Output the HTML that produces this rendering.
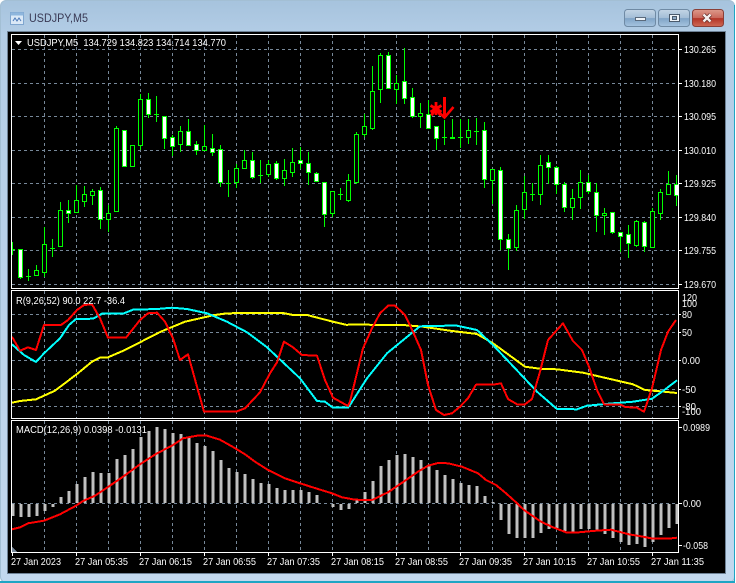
<!DOCTYPE html>
<html><head><meta charset="utf-8"><style>
html,body{margin:0;padding:0;background:#fff;width:736px;height:583px;overflow:hidden}
svg{display:block}
text{font-family:"Liberation Sans",sans-serif;font-size:10.5px;fill:#fff}
</style></head><body>
<svg xmlns="http://www.w3.org/2000/svg" width="736" height="583" viewBox="0 0 736 583">
<defs>
<linearGradient id="fr" x1="0" y1="0" x2="0" y2="1"><stop offset="0" stop-color="#a6c3dd"/><stop offset=".06" stop-color="#b3cde6"/><stop offset="1" stop-color="#c2d8ee"/></linearGradient>
<linearGradient id="bt" x1="0" y1="0" x2="0" y2="1"><stop offset="0" stop-color="#c3d5e6"/><stop offset=".5" stop-color="#a3bdd6"/><stop offset=".52" stop-color="#7fa3c6"/><stop offset="1" stop-color="#a6c4e0"/></linearGradient>
<linearGradient id="cl" x1="0" y1="0" x2="0" y2="1"><stop offset="0" stop-color="#dd9a8c"/><stop offset=".5" stop-color="#c9675a"/><stop offset=".52" stop-color="#b23326"/><stop offset="1" stop-color="#cf6a55"/></linearGradient>
<clipPath id="p1"><rect x="12" y="35" width="666" height="253"/></clipPath>
<clipPath id="p2"><rect x="12" y="291" width="666" height="127"/></clipPath>
<clipPath id="p3"><rect x="12" y="421" width="666" height="131"/></clipPath>
</defs>
<rect x="0" y="0" width="735" height="583" rx="6" fill="url(#fr)"/>
<rect x="0.5" y="0.5" width="734" height="582" rx="6" fill="none" stroke="#a3bfd4"/>
<path d="M0 582H735" stroke="#1ea5c4" stroke-width="2" fill="none"/>
<path d="M734.5 5V583" stroke="#1ea5c4" stroke-width="1" fill="none"/>
<!-- title icon -->
<rect x="10.5" y="12.5" width="13" height="12" fill="#dbe9f7" stroke="#7fa6cf"/>
<rect x="10.5" y="12.5" width="13" height="3" fill="#8eb6dd"/>
<path d="M13 21l2-3 2 3 2-3 2 3" fill="none" stroke="#4a78b8"/>
<text x="29" y="22" textLength="59" lengthAdjust="spacingAndGlyphs" style="font-size:12px;fill:#3a3a55">USDJPY,M5</text>
<!-- buttons -->
<rect x="624.5" y="9.5" width="31" height="17" rx="3" fill="url(#bt)" stroke="#6f8aa4"/>
<rect x="635.5" y="17.5" width="10" height="3" fill="#eef3f8" stroke="#5a6a7c"/>
<rect x="658.5" y="9.5" width="31" height="17" rx="3" fill="url(#bt)" stroke="#6f8aa4"/>
<rect x="669.5" y="14.5" width="10" height="7" fill="#eef3f8" stroke="#4a5a6c"/>
<rect x="672.5" y="16.5" width="4" height="3" fill="#8fabc6" stroke="#4a5a6c"/>
<rect x="692.5" y="9.5" width="31" height="17" rx="3" fill="url(#cl)" stroke="#8a3f38"/>
<path d="M703.5 14.5l7 7M710.5 14.5l-7 7" stroke="#5e2a26" stroke-width="4" fill="none"/>
<path d="M703.5 14.5l7 7M710.5 14.5l-7 7" stroke="#f5efee" stroke-width="2.4" fill="none"/>
<!-- black client -->
<rect x="7.5" y="31.5" width="718" height="542" fill="#000" stroke="#6e8296"/>
<rect x="8" y="32" width="717" height="541" fill="#000"/>
<!-- grid -->
<g shape-rendering="crispEdges" stroke="#778899" stroke-width="1" stroke-dasharray="3 3" fill="none">
<path d="M12 49.5H678M12 83.5H678M12 116.5H678M12 150.5H678M12 183.5H678M12 217.5H678M12 250.5H678M12 284.5H678"/>
<path d="M12 314.5H678M12 332.5H678M12 360.5H678M12 389.5H678M12 406.5H678"/>
<path d="M12 503.5H678"/>
<path d="M44.5 35V288M76.5 35V288M108.5 35V288M140.5 35V288M172.5 35V288M204.5 35V288M236.5 35V288M268.5 35V288M300.5 35V288M332.5 35V288M364.5 35V288M396.5 35V288M428.5 35V288M460.5 35V288M492.5 35V288M524.5 35V288M556.5 35V288M588.5 35V288M620.5 35V288M652.5 35V288"/>
<path d="M44.5 291V418M76.5 291V418M108.5 291V418M140.5 291V418M172.5 291V418M204.5 291V418M236.5 291V418M268.5 291V418M300.5 291V418M332.5 291V418M364.5 291V418M396.5 291V418M428.5 291V418M460.5 291V418M492.5 291V418M524.5 291V418M556.5 291V418M588.5 291V418M620.5 291V418M652.5 291V418"/>
<path d="M44.5 421V552M76.5 421V552M108.5 421V552M140.5 421V552M172.5 421V552M204.5 421V552M236.5 421V552M268.5 421V552M300.5 421V552M332.5 421V552M364.5 421V552M396.5 421V552M428.5 421V552M460.5 421V552M492.5 421V552M524.5 421V552M556.5 421V552M588.5 421V552M620.5 421V552M652.5 421V552"/>
</g>
<!-- candles -->
<g clip-path="url(#p1)" shape-rendering="crispEdges" stroke="#00ff00" stroke-width="1">
<path fill="none" d="M12.5 242V255M20.5 249V279M28.5 269V281M36.5 265V276M44.5 227V277M52.5 239V257M60.5 202V246M68.5 200V223M76.5 185V213M84.5 186V207M92.5 189V205M100.5 187V229M108.5 205V232M116.5 126V211M124.5 130V166M132.5 145V167M140.5 94V150M148.5 93V118M156.5 96V122M164.5 116V149M172.5 135V156M180.5 126V152M188.5 119V145M196.5 141V155M204.5 125V151M212.5 134V156M220.5 145V187M228.5 170V197M236.5 164V188M244.5 150V168M252.5 152V179M260.5 160V183M268.5 160V177M276.5 161V180M284.5 159V186M292.5 148V177M300.5 147V169M308.5 152V185M316.5 172V181M324.5 182V227M332.5 191V217M340.5 188V200M348.5 174V202M356.5 132V184M364.5 114V137M372.5 66V130M380.5 53V103M388.5 52V89M396.5 75V104M404.5 48V104M412.5 88V118M420.5 103V128M428.5 100V129M436.5 126V150M444.5 120V145M452.5 119V138M460.5 119V148M468.5 119V144M476.5 118V145M484.5 122V188M492.5 169V204M500.5 167V250M508.5 234V270M516.5 205V251M524.5 176V219M532.5 183V201M540.5 155V205M548.5 155V184M556.5 166V194M564.5 182V212M572.5 189V220M580.5 170V209M588.5 175V194M596.5 183V232M604.5 208V235M612.5 212V234M620.5 232V252M628.5 225V258M636.5 220V247M644.5 221V252M652.5 208V247M660.5 189V220M668.5 171V195M676.5 175V206"/>
<path fill="none" d="M10 249.5h5M26 276.5h5M50 248.5h5M154 114.5h5M226 183.5h5M258 175.5h5M338 194.5h5M442 137.5h5M450 137.5h5M450 138.5h5M458 137.5h5M474 131.5h5M530 194.5h5"/>
<path fill="#000" d="M34.5 270.5h4v5h-4zM42.5 244.5h4v28h-4zM58.5 210.5h4v36h-4zM74.5 200.5h4v12h-4zM82.5 194.5h4v7h-4zM90.5 191.5h4v4h-4zM106.5 213.5h4v6h-4zM114.5 128.5h4v83h-4zM130.5 145.5h4v21h-4zM138.5 99.5h4v46h-4zM178.5 131.5h4v13h-4zM202.5 146.5h4v4h-4zM234.5 168.5h4v14h-4zM242.5 160.5h4v8h-4zM266.5 164.5h4v10h-4zM282.5 170.5h4v8h-4zM290.5 162.5h4v10h-4zM330.5 191.5h4v22h-4zM346.5 180.5h4v20h-4zM354.5 134.5h4v48h-4zM362.5 126.5h4v8h-4zM370.5 91.5h4v37h-4zM378.5 55.5h4v34h-4zM394.5 83.5h4v6h-4zM418.5 113.5h4v3h-4zM466.5 130.5h4v7h-4zM490.5 169.5h4v11h-4zM514.5 210.5h4v37h-4zM522.5 192.5h4v17h-4zM538.5 165.5h4v29h-4zM570.5 198.5h4v9h-4zM578.5 182.5h4v15h-4zM602.5 213.5h4v2h-4zM634.5 221.5h4v24h-4zM650.5 211.5h4v36h-4zM658.5 192.5h4v21h-4zM666.5 184.5h4v10h-4z"/>
<path fill="#fff" d="M18.5 249.5h4v28h-4zM66.5 210.5h4v3h-4zM98.5 190.5h4v29h-4zM122.5 130.5h4v36h-4zM146.5 99.5h4v15h-4zM162.5 116.5h4v22h-4zM170.5 137.5h4v9h-4zM186.5 131.5h4v14h-4zM194.5 144.5h4v6h-4zM210.5 148.5h4v4h-4zM218.5 149.5h4v33h-4zM250.5 160.5h4v17h-4zM274.5 163.5h4v15h-4zM298.5 160.5h4v3h-4zM306.5 163.5h4v9h-4zM314.5 173.5h4v8h-4zM322.5 182.5h4v32h-4zM386.5 55.5h4v33h-4zM402.5 81.5h4v17h-4zM410.5 97.5h4v19h-4zM426.5 114.5h4v14h-4zM434.5 126.5h4v12h-4zM482.5 130.5h4v49h-4zM498.5 170.5h4v69h-4zM506.5 239.5h4v9h-4zM546.5 162.5h4v5h-4zM554.5 167.5h4v17h-4zM562.5 184.5h4v23h-4zM586.5 182.5h4v9h-4zM594.5 192.5h4v23h-4zM610.5 212.5h4v20h-4zM618.5 232.5h4v4h-4zM626.5 234.5h4v9h-4zM642.5 222.5h4v24h-4zM674.5 184.5h4v11h-4z"/>
</g>
<!-- red objects -->
<g clip-path="url(#p1)">
<path d="M436 102V115M430.5 105.5L441.5 112M441.5 105.5L430.5 112M431.5 115.5L436 108L440.5 115.5" fill="none" stroke="#ff0000" stroke-width="2.8"/>
<circle cx="436" cy="109" r="3.5" fill="#ff0000"/>
<rect x="443" y="97" width="3" height="20" fill="#ff0000"/>
<path d="M438.5 112L444.5 117.5L453.5 107" fill="none" stroke="#ff0000" stroke-width="2.6"/>
</g>
<!-- indicator lines -->
<g clip-path="url(#p2)" fill="none" stroke-width="2" stroke-linejoin="round" shape-rendering="crispEdges">
<polyline stroke="#ffff00" points="12,402.7 20,401 36,399.3 55,390.7 77,374 92,361.7 100,357.7 108,357.3 125,350 140,342.3 160,332 185,321.7 213,315.3 227,313.3 260,313 283,313 293,315 307,315 333,321.7 347,325 350,324.3 380,325 403,325 423,326.7 450,330.7 477,334 493,343.3 525,366.7 540,368.7 557,369.3 583,372.7 633,384.3 645,390 660,391.3 677,393"/>
<polyline stroke="#00ffff" points="12,344.3 24,355 36,362 44,353.3 60,338.3 69,325 76,319 93,318.7 102,313.7 124,313.3 133,309.7 157,309 172,307.7 187,309 207,313.3 227,321.7 247,332.3 267,347.3 283,362.3 300,378.3 317,401 325,401.7 333,407.7 348,407.7 350,405 367,378.3 387,353.3 420,326.3 447,325.7 457,325.7 477,330 493,345 522,375.7 537,391.7 557,409 577,409.3 587,405.7 613,403.3 633,401.7 652,398.7 663,391 677,380.3"/>
<polyline stroke="#ff0000" points="12,336.7 20,350.7 28,347.3 36,350 44,325 61,325 68,320 77,310 84,305 92,304.3 100,318.3 108,337.7 126,337.7 140,320 148,313.3 157,312.7 165,321.7 173,338.3 180,360 188,354.3 204,411.7 236,411.7 245,408.3 260,392.3 270,373.3 277,362.3 284,341.7 293,347.3 302,355 317,355.7 325,380 333,397.7 348,406 350,401.7 363,348.3 372,328.3 380,313.3 388,305.7 395,305.7 405,315 413,331.7 421,350 428,385 436,410 444,415 452,413.3 460,406.7 468,398.3 476,384.7 493,384.7 501,383.3 508,399 517,404.3 525,404.3 532,399 540,371.7 548,340 563,323.3 573,341 582,350 589,366.7 597,390 604,404.3 620,404.3 625,407 637,407.7 644,411.7 652,388.3 661,350 668,331.7 676,320"/>
</g>
<!-- MACD -->
<g clip-path="url(#p3)" shape-rendering="crispEdges">
<path fill="none" stroke="#c0c0c0" stroke-width="3" d="M13 504V516M21 504V517M29 504V517M37 504V516M45 504V511M53 504V507M61 503V497M69 503V491M77 503V484M85 503V477M93 503V472M101 503V473M109 503V473M117 503V459M125 503V455M133 503V449M141 503V437M149 503V431M157 503V427M165 503V429M173 503V433M181 503V434M189 503V438M197 503V443M205 503V446M213 503V451M221 503V460M229 503V468M237 503V472M245 503V474M253 503V479M261 503V483M269 503V484M277 503V488M285 503V490M293 503V490M301 503V490M309 503V492M317 503V495M333 504V507M341 504V510M349 504V509M357 503V500M365 503V492M373 503V481M381 503V466M389 503V460M397 503V455M405 503V454M413 503V457M421 503V460M429 503V465M437 503V470M445 503V475M453 503V479M461 503V483M469 503V485M477 503V486M485 503V496M493 503V502M501 504V520M509 504V534M517 504V538M525 504V538M533 504V538M541 504V533M549 504V529M557 504V529M565 504V531M573 504V533M581 504V529M589 504V529M597 504V530M605 504V534M613 504V538M621 504V542M629 504V545M637 504V544M645 504V547M653 504V542M661 504V535M669 504V528M677 504V524"/>
<polyline fill="none" stroke="#ff0000" stroke-width="2" points="12,529.3 20,527.3 28,523.3 44,520.7 60,514.3 76,505.7 83,501 95,495.7 108,487 123,476.7 140,464.3 157,453.3 172,445.7 183,438.3 197,435.7 207,435.7 220,439.7 233,447 245,454.3 255,461.7 268,470 285,478.3 300,483.3 318,489 332,493.3 342,497.3 355,499.7 372,500 388,492.3 405,480.7 418,471.7 428,465.7 438,463 448,463.3 462,466.7 478,473.3 486,480 496,485 506,493.3 516,502.3 524,510 541,521.7 553,527.3 566,532.3 579,532.3 596,530.7 611,529.7 629,534.3 643,536.7 653,538.7 668,538.7 677,537.7"/>
<polygon points="12,547 12,552 17,552" fill="#778899"/>
</g>
<!-- pane borders & ticks -->
<g shape-rendering="crispEdges" fill="none" stroke="#fff" stroke-width="1">
<rect x="11.5" y="34.5" width="667" height="254"/>
<rect x="11.5" y="290.5" width="667" height="128"/>
<rect x="11.5" y="420.5" width="667" height="132"/>
<path d="M678 49.5h4M678 83.5h4M678 116.5h4M678 150.5h4M678 183.5h4M678 217.5h4M678 250.5h4M678 284.5h4"/>
<path d="M678 314.5h3M678 332.5h3M678 360.5h3M678 389.5h3M678 406.5h3M678 503.5h4M678 427.5h4M678 545.5h4"/>
<path d="M12.5 552v4M76.5 552v4M140.5 552v4M204.5 552v4M268.5 552v4M332.5 552v4M396.5 552v4M460.5 552v4M524.5 552v4M588.5 552v4M652.5 552v4"/>
</g>
<!-- legend -->
<polygon points="15,41 22,41 18.5,45" fill="#fff"/>
<text x="27" y="46" textLength="199" lengthAdjust="spacingAndGlyphs" xml:space="preserve">USDJPY,M5  134.729 134.823 134.714 134.770</text>
<text x="16" y="304" textLength="109" lengthAdjust="spacingAndGlyphs">R(9,26,52) 90.0 22.7 -36.4</text>
<text x="16" y="433" textLength="131" lengthAdjust="spacingAndGlyphs">MACD(12,26,9) 0.0398 -0.0131</text>
<!-- right axis -->
<g>
<text x="684" y="53" textLength="32" lengthAdjust="spacingAndGlyphs">130.265</text>
<text x="684" y="87" textLength="32" lengthAdjust="spacingAndGlyphs">130.180</text>
<text x="684" y="120" textLength="32" lengthAdjust="spacingAndGlyphs">130.095</text>
<text x="684" y="154" textLength="32" lengthAdjust="spacingAndGlyphs">130.010</text>
<text x="684" y="187" textLength="32" lengthAdjust="spacingAndGlyphs">129.925</text>
<text x="684" y="221" textLength="32" lengthAdjust="spacingAndGlyphs">129.840</text>
<text x="684" y="254" textLength="32" lengthAdjust="spacingAndGlyphs">129.755</text>
<text x="684" y="288" textLength="32" lengthAdjust="spacingAndGlyphs">129.670</text>
<text x="682" y="301" textLength="15" lengthAdjust="spacingAndGlyphs">120</text>
<text x="682" y="307" textLength="15" lengthAdjust="spacingAndGlyphs">100</text>
<text x="682" y="318" textLength="10" lengthAdjust="spacingAndGlyphs">80</text>
<text x="682" y="336" textLength="10" lengthAdjust="spacingAndGlyphs">50</text>
<text x="682" y="364" textLength="18" lengthAdjust="spacingAndGlyphs">0.00</text>
<text x="682" y="393" textLength="14" lengthAdjust="spacingAndGlyphs">-50</text>
<text x="682" y="410" textLength="14" lengthAdjust="spacingAndGlyphs">-80</text>
<text x="682" y="415" textLength="19" lengthAdjust="spacingAndGlyphs">-100</text>
<text x="683" y="431" textLength="27" lengthAdjust="spacingAndGlyphs">0.0989</text>
<text x="683" y="507" textLength="18" lengthAdjust="spacingAndGlyphs">0.00</text>
<text x="683" y="549" textLength="25" lengthAdjust="spacingAndGlyphs">-0.058</text>
</g>
<!-- time axis -->
<g>
<text x="11" y="565" textLength="50" lengthAdjust="spacingAndGlyphs">27 Jan 2023</text>
<text x="75" y="565" textLength="53" lengthAdjust="spacingAndGlyphs">27 Jan 05:35</text>
<text x="139" y="565" textLength="53" lengthAdjust="spacingAndGlyphs">27 Jan 06:15</text>
<text x="203" y="565" textLength="53" lengthAdjust="spacingAndGlyphs">27 Jan 06:55</text>
<text x="267" y="565" textLength="53" lengthAdjust="spacingAndGlyphs">27 Jan 07:35</text>
<text x="331" y="565" textLength="53" lengthAdjust="spacingAndGlyphs">27 Jan 08:15</text>
<text x="395" y="565" textLength="53" lengthAdjust="spacingAndGlyphs">27 Jan 08:55</text>
<text x="459" y="565" textLength="53" lengthAdjust="spacingAndGlyphs">27 Jan 09:35</text>
<text x="523" y="565" textLength="53" lengthAdjust="spacingAndGlyphs">27 Jan 10:15</text>
<text x="587" y="565" textLength="53" lengthAdjust="spacingAndGlyphs">27 Jan 10:55</text>
<text x="651" y="565" textLength="53" lengthAdjust="spacingAndGlyphs">27 Jan 11:35</text>
</g>
</svg>
</body></html>
